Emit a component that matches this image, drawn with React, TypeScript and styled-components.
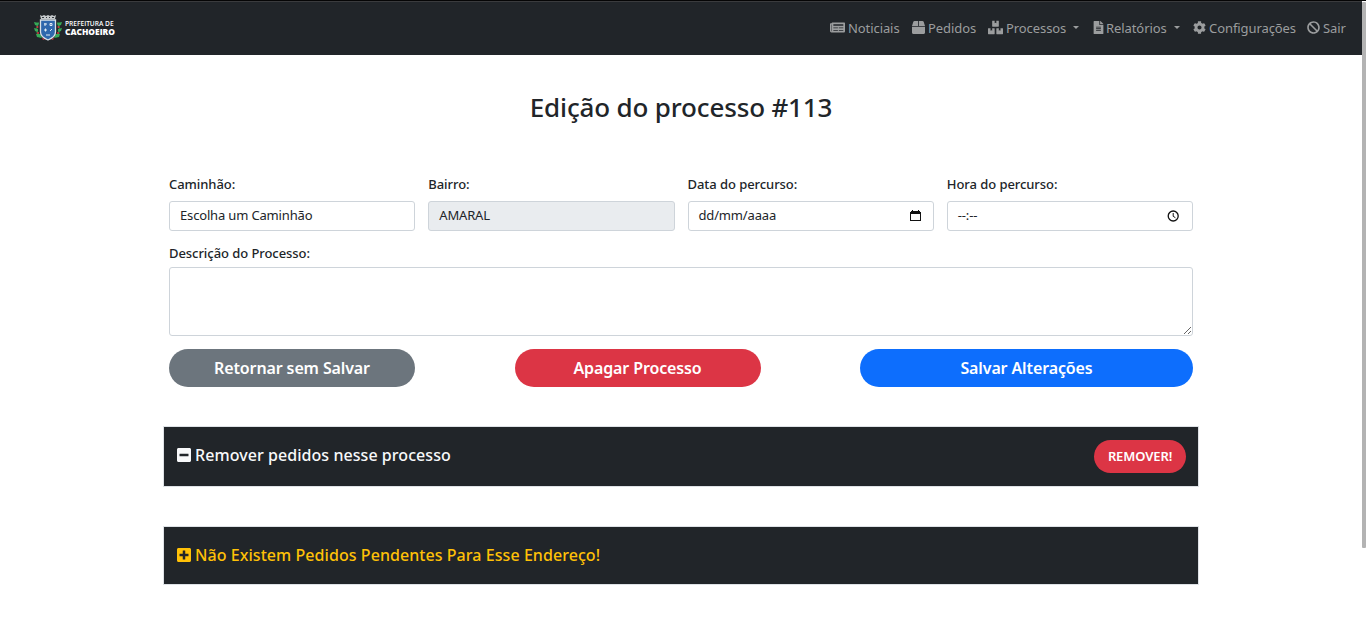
import React from 'react';
import styled, { createGlobalStyle } from 'styled-components';
import { FaNewspaper, FaBox, FaBoxes, FaFileAlt, FaCog, FaBan, FaMinusSquare, FaPlusSquare } from 'react-icons/fa';

const GlobalStyle = createGlobalStyle`
  *, *::before, *::after { box-sizing: border-box; }
  html, body { margin: 0; height: 630px; overflow: hidden; }
  body { background: #fff; color: #212529; font-family: 'Noto Sans', 'Liberation Sans', sans-serif; font-size: 13px; line-height: 1.5; }
`;

const Screen = styled.div`
  display: flex;
  height: 630px;
  border-top: 1px solid #050505;
`;

const Page = styled.div`
  flex: 1;
  min-width: 0;
`;

const ScrollTrack = styled.div`
  width: 4px;
  padding-top: 1px;
`;

const ScrollThumb = styled.div`
  height: 546px;
  background: #b3b3b3;
  border-radius: 1px;
`;

const Navbar = styled.header`
  height: 54px;
  border-top: 1px solid #3a3b3d;
  background: #212529;
  display: flex;
  align-items: center;
  justify-content: space-between;
  padding: 0 16px 2px 34px;
`;

const Brand = styled.div`
  display: flex;
  align-items: center;
  gap: 3px;
  color: #fff;
`;

const BrandText = styled.div`
  display: flex;
  flex-direction: column;
  gap: 1px;
  padding-top: 1px;
  font-family: 'Open Sans', sans-serif;
  white-space: nowrap;
`;

const BrandTop = styled.span`
  font-size: 6.6px;
  line-height: 7px;
  font-weight: 600;
`;

const BrandName = styled.span`
  font-size: 8.4px;
  line-height: 8px;
  font-weight: 800;
`;

const Nav = styled.nav`
  display: flex;
  align-items: center;
`;

const NavLink = styled.a<{ $width: number; $narrowIcon?: boolean }>`
  width: ${(p) => p.$width}px;
  display: flex;
  align-items: center;
  color: #9b9d9e;
  white-space: nowrap;
  gap: 3px;
  line-height: 20px;
  letter-spacing: -0.08px;

  svg {
    flex: none;
    margin: ${(p) => (p.$narrowIcon ? '0 -2px 0 -1px' : '0')};
  }
`;

const Caret = styled.span`
  margin-left: 4px;
  border: 3.5px solid transparent;
  border-top-color: currentColor;
  border-bottom: 0;
`;

const Main = styled.main`
  width: 1034px;
  margin: 0 auto;
`;

const Title = styled.h1`
  margin: 0;
  padding-top: 34px;
  height: 119px;
  text-align: center;
  font-size: 26px;
  line-height: 37px;
  font-weight: 500;
  letter-spacing: -0.16px;
`;

const Form = styled.form`
  padding: 0 5px;
`;

const Fields = styled.div`
  display: grid;
  grid-template-columns: repeat(4, 1fr);
  column-gap: 13px;
`;

const Label = styled.label`
  display: block;
  height: 27px;
  line-height: 20px;
  font-weight: 500;
  letter-spacing: -0.06px;
`;

const Control = styled.div<{ $disabled?: boolean }>`
  height: 30px;
  border: 1px solid #ced4da;
  border-radius: 3px;
  padding: 0 12px 0 10px;
  background: ${(p) => (p.$disabled ? '#e9ecef' : '#fff')};
  display: flex;
  align-items: center;
  justify-content: space-between;
  line-height: 20px;
  letter-spacing: -0.16px;
`;

const Value = styled.span`
  padding-bottom: 2px;
`;

const Description = styled.div`
  margin-top: 12px;
`;

const TextArea = styled.textarea`
  display: block;
  width: 100%;
  height: 69px;
  margin-top: -3px;
  border: 1px solid #ced4da;
  border-radius: 3px;
  resize: vertical;
`;

const Actions = styled.div`
  display: flex;
  justify-content: space-between;
  margin-top: 13px;
`;

const Button = styled.button<{ $color: string; $width: number; $small?: boolean }>`
  width: ${(p) => p.$width}px;
  height: ${(p) => (p.$small ? 33 : 38)}px;
  border: 0;
  border-radius: 19px;
  padding: ${(p) => (p.$small ? '0 0 2px' : '0')};
  background: ${(p) => p.$color};
  color: #fff;
  font-family: inherit;
  font-size: ${(p) => (p.$small ? 13 : 16)}px;
  line-height: 24px;
  font-weight: 600;
  letter-spacing: -0.12px;
`;

const Panel = styled.section<{ $height: number; $color: string }>`
  height: ${(p) => p.$height}px;
  margin: 39px -1px 0;
  border: 1px solid #dee2e6;
  background: #212529;
  color: ${(p) => p.$color};
  display: flex;
  align-items: center;
  justify-content: space-between;
  padding: 0 12px;
`;

const PanelTitle = styled.h2<{ $lift: number }>`
  margin: 0;
  padding-bottom: ${(p) => p.$lift}px;
  display: flex;
  align-items: center;
  gap: 3px;
  font-size: 16px;
  line-height: 24px;
  font-weight: 500;
  letter-spacing: 0.06px;
`;

const Crest = () => (
  <svg width="28" height="28" viewBox="0 0 28 28">
    <path d="M4.5 8C2 12 1 19 6 23m17.5-15c2.5 4 3.5 11-1.500 15" fill="none" stroke="#28653c" strokeWidth="1.5" />
    <g fill="#36a957">
      <path d="M0 8l5 1-1 3-3-1zM0 14l4 1v3l-3-1zM2 20l4 0 2 4-5-1zM28 8l-5 1 1 3 3-1zM28 14l-4 1v3l3-1zM26 20h-4l-2 4 5-1z" />
    </g>
    <g fill="#d8333e">
      <circle cx="3.500" cy="13" r="1" /><circle cx="24.500" cy="13" r="1" />
      <circle cx="4" cy="19" r="1" /><circle cx="24" cy="19" r="1" />
      <path d="M8 24l3 1-2 1zM20 24l-3 1 2 1z" />
    </g>
    <path d="M6 1l2 1 2-1 2 1 2-1 2 1 2-1 2 1 2-1-1 4H7z" fill="#c5c9cb" />
    <path d="M8 3.500h2m2 0h1m2 0h1m2 0h2" stroke="#333a40" strokeWidth="1" />
    <path d="M6.500 6h15v12q0 5-7.500 8-7.500-3-7.500-8z" fill="#2f68ad" stroke="#d9e1e6" strokeWidth="1.300" />
    <path d="M10 10h3m-2-1v3m5-2.500h2v2h-2zM10 16h3m-1.500-1.500v3M16 17l2-2M12 21h4" fill="none" stroke="#e4edf2" strokeWidth="1" />
  </svg>
);

const CalendarIcon = () => (
  <svg width="11" height="12" viewBox="0 0 11 12" shapeRendering="crispEdges">
    <path d="M1 1h1V0h1v1h5V0h1v1h1v1h1v9H0V2h1zM1 4v6h9V4z" fill="#111" fillRule="evenodd" />
  </svg>
);

const ClockIcon = () => (
  <svg width="13" height="12" viewBox="0 0 13 12" fill="none" stroke="#111" strokeWidth="1.300">
    <circle cx="6.200" cy="6" r="5" />
    <path d="M6.200 3v3.300l2.200 1.400" strokeWidth="1" />
  </svg>
);

export default function App() {
  return (
    <>
      <GlobalStyle />
      <Screen>
        <Page>
          <Navbar>
            <Brand>
              <Crest />
              <BrandText>
                <BrandTop>PREFEITURA DE</BrandTop>
                <BrandName>CACHOEIRO</BrandName>
              </BrandText>
            </Brand>
            <Nav>
              <NavLink $width={82}><FaNewspaper size={15} />Noticiais</NavLink>
              <NavLink $width={76}><FaBox size={13} />Pedidos</NavLink>
              <NavLink $width={105}><FaBoxes size={15} />Processos <Caret /></NavLink>
              <NavLink $width={100} $narrowIcon><FaFileAlt size={13} />Relatórios <Caret /></NavLink>
              <NavLink $width={114}><FaCog size={13} />Configurações</NavLink>
              <NavLink $width={39}><FaBan size={13} />Sair</NavLink>
            </Nav>
          </Navbar>
          <Main>
            <Title>Edição do processo #113</Title>
            <Form>
              <Fields>
                <div><Label>Caminhão:</Label><Control><Value>Escolha um Caminhão</Value></Control></div>
                <div><Label>Bairro:</Label><Control $disabled><Value>AMARAL</Value></Control></div>
                <div><Label>Data do percurso:</Label><Control><Value>dd/mm/aaaa</Value><CalendarIcon /></Control></div>
                <div><Label>Hora do percurso:</Label><Control><Value>--:--</Value><ClockIcon /></Control></div>
              </Fields>
              <Description>
                <Label>Descrição do Processo:</Label>
                <TextArea />
              </Description>
              <Actions>
                <Button type="button" $color="#6c757d" $width={246}>Retornar sem Salvar</Button>
                <Button type="button" $color="#dc3545" $width={246}>Apagar Processo</Button>
                <Button type="button" $color="#0d6efd" $width={333}>Salvar Alterações</Button>
              </Actions>
            </Form>
            <Panel $height={61} $color="#f8f9fa">
              <PanelTitle $lift={3}><FaMinusSquare size={16} />Remover pedidos nesse processo</PanelTitle>
              <Button type="button" $small $color="#dc3545" $width={92}>REMOVER!</Button>
            </Panel>
            <Panel $height={59} $color="#ffc107">
              <PanelTitle $lift={1}><FaPlusSquare size={16} />Não Existem Pedidos Pendentes Para Esse Endereço!</PanelTitle>
            </Panel>
          </Main>
        </Page>
        <ScrollTrack><ScrollThumb /></ScrollTrack>
      </Screen>
    </>
  );
}
